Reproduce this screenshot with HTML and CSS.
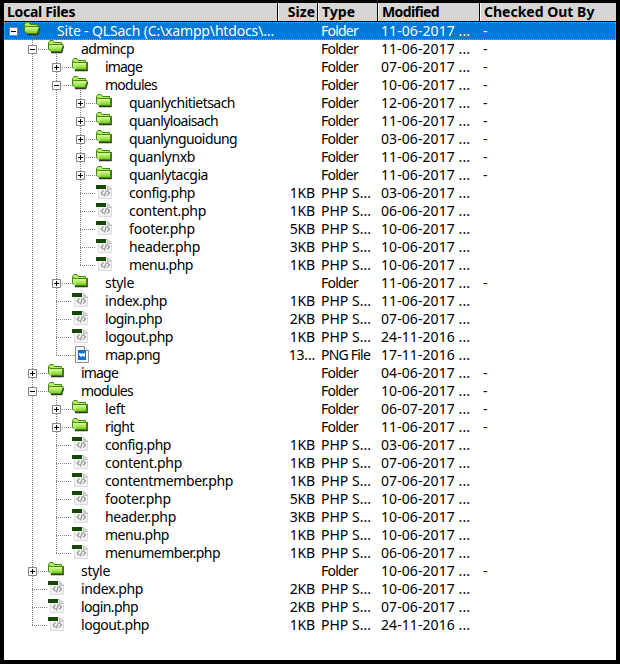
FILE: index.html
```html
<!DOCTYPE html>
<html lang="en">
<head>
<meta charset="utf-8">
<title>Local Files</title>
<link rel="stylesheet" href="styles.css">
</head>
<body>
<svg class="symbols" width="0" height="0">
  <defs>
    <linearGradient id="leaf" x1="0" y1="0" x2="0" y2="1">
      <stop offset="0" stop-color="#e2fb9c"/>
      <stop offset="1" stop-color="#74cf22"/>
    </linearGradient>
    <symbol id="folder" viewBox="1 1 18 18">
      <path d="M4 13.500H16V5" fill="none" stroke="#2c3a22" stroke-width="1.600"/>
      <path d="M1.500 10.500V3.500L3 1.500H6L7.500 3.500H14.500V6" fill="#b9ee62" stroke="#3d8610"/>
      <path d="M4 5.500H15.500V12.500H4L1.500 10V4.500Z" fill="#c9f280" stroke="#3d8610"/>
      <path d="M4.500 6H15V12H4.500Z" fill="url(#leaf)"/>
    </symbol>
    <symbol id="open" viewBox="1 1 18 18">
      <path d="M4 13.500H14.500L16.500 7" fill="none" stroke="#2c3a22" stroke-width="1.600"/>
      <path d="M1.500 10.500V3.500L3 1.500H6L7.500 3.500H14.500V6" fill="#b9ee62" stroke="#3d8610"/>
      <path d="M4.500 5.500H16V7L14 12.500H4L1.500 10V6Z" fill="url(#leaf)" stroke="#3d8610"/>
    </symbol>
    <symbol id="php" viewBox="0 0 18 18">
      <path d="M2.500 1.500H12L15.500 5V14.500H2.500Z" fill="#f3f3f3" stroke="#dcdcdc"/>
      <path d="M11.500 1.500V5.500H15.500Z" fill="#d8d8d8" stroke="#c4c4c4"/>
      <path d="M7.500 6.500L5.200 9L7.500 11.500M11.300 6.500L13.600 9L11.300 11.500M10.300 6L8.500 12.500" fill="none" stroke="#9c9c9c" stroke-width="1.300"/>
      <path d="M0 1H10V5H0Z" fill="#154a05"/>
    </symbol>
    <symbol id="png" viewBox="0 0 18 18">
      <path d="M3.500 .5H12.500L16.500 4.500V16.500H3.500Z" fill="#fafafa" stroke="#8c8c8c"/>
      <path d="M12.500 .5V4.500H16.500" fill="#fff" stroke="#8c8c8c"/>
      <path d="M6 4H14V14H6Z" fill="#0b72cf"/>
      <path d="M7 7H8L9 8L10 7L11 8L12 7H13V10L12 11L10.500 9.500L9 11L7 9Z" fill="#fff"/>
    </symbol>
  </defs>
</svg>
<main class="panel">
  <header class="row head"><span class="tight">Local Files</span><span class="right">Size</span><span>Type</span><span class="tighter">Modified</span><span>Checked Out By</span></header>
  <div id="rows"></div>
</main>
<script src="tree.js"></script>
</body>
</html>
```

FILE: styles.css
```css
body { margin: 0; background: #000; font: 14px/18px "Noto Sans", sans-serif; color: #000; }
.symbols { position: absolute; }
.panel { box-sizing: border-box; margin: 3px 4px 0; height: 657px; background: #fff; overflow: hidden; }
.row { display: grid; grid-template-columns: 274px 40px 60px 102px 136px; height: 18px; white-space: pre; }
.head { height: 19px; background: #d6d6d6; font-weight: 700; line-height: 18px; box-sizing: border-box; border-bottom: 1px solid #000; }
.head span { box-sizing: border-box; padding-left: 3px; border-right: 1px solid #000; }
.head span + span { border-left: 1px solid #fff; }
.head span:last-child { border-right: 0; }
.head .right { text-align: right; padding: 0 2px 0 0; }
.tight { letter-spacing: -.3px; }
.tighter { letter-spacing: -.6px; }
.row.selected { background: #0078d7; color: #fff; outline: 1px dotted #f08a30; outline-offset: -1px; }
.name { display: flex; min-width: 0; }
.guide, .node { flex: none; width: 24px; height: 18px; overflow: visible; }
.pic { flex: none; width: 18px; height: 18px; margin-left: -4px; }
.label { margin-left: 15px; }
.size { text-align: right; padding-right: 3px; letter-spacing: -.2px; }
.type, .date, .out { padding-left: 3px; }
.date { letter-spacing: .08px; }
```

FILE: tree.js
```js
const files = [
  [0, "-open", "Site - QLSach (C:\\xampp\\htdocs\\...", "", "11-06-2017"],
  [1, "-open", "admincp", "", "11-06-2017"],
  [2, "+folder", "image", "", "07-06-2017"],
  [2, "-open", "modules", "", "10-06-2017"],
  [3, "+folder", "quanlychitietsach", "", "12-06-2017"],
  [3, "+folder", "quanlyloaisach", "", "11-06-2017"],
  [3, "+folder", "quanlynguoidung", "", "03-06-2017"],
  [3, "+folder", "quanlynxb", "", "11-06-2017"],
  [3, "+folder", "quanlytacgia", "", "11-06-2017"],
  [3, " php", "config.php", "1KB", "03-06-2017"],
  [3, " php", "content.php", "1KB", "06-06-2017"],
  [3, " php", "footer.php", "5KB", "10-06-2017"],
  [3, " php", "header.php", "3KB", "10-06-2017"],
  [3, " php", "menu.php", "1KB", "10-06-2017"],
  [2, "+folder", "style", "", "11-06-2017"],
  [2, " php", "index.php", "1KB", "11-06-2017"],
  [2, " php", "login.php", "2KB", "07-06-2017"],
  [2, " php", "logout.php", "1KB", "24-11-2016"],
  [2, " png", "map.png", "13...", "17-11-2016"],
  [1, "+folder", "image", "", "04-06-2017"],
  [1, "-open", "modules", "", "10-06-2017"],
  [2, "+folder", "left", "", "06-07-2017"],
  [2, "+folder", "right", "", "11-06-2017"],
  [2, " php", "config.php", "1KB", "03-06-2017"],
  [2, " php", "content.php", "1KB", "07-06-2017"],
  [2, " php", "contentmember.php", "1KB", "07-06-2017"],
  [2, " php", "footer.php", "5KB", "10-06-2017"],
  [2, " php", "header.php", "3KB", "10-06-2017"],
  [2, " php", "menu.php", "1KB", "10-06-2017"],
  [2, " php", "menumember.php", "1KB", "06-06-2017"],
  [1, "+folder", "style", "", "10-06-2017"],
  [1, " php", "index.php", "2KB", "10-06-2017"],
  [1, " php", "login.php", "2KB", "07-06-2017"],
  [1, " php", "logout.php", "1KB", "24-11-2016"]
];

// Text widths in pixels; the letters are spaced to fill them.
const widths = {
  "Site - QLSach (C:\\xampp\\htdocs\\...": 217, "admincp": 53, "image": 37, "modules": 52,
  "quanlychitietsach": 106, "quanlyloaisach": 89, "quanlynguoidung": 108, "quanlynxb": 66,
  "quanlytacgia": 79, "config.php": 66, "content.php": 77, "footer.php": 66, "header.php": 71,
  "menu.php": 64, "style": 29, "index.php": 62, "login.php": 57, "logout.php": 68,
  "map.png": 55, "left": 20, "right": 29, "contentmember.php": 128, "menumember.php": 115,
  "Folder": 37, "PNG File": 49, "PHP S...": 50
};

// True when another entry of the given level follows before its parent closes.
function continues(index, level) {
  for (let i = index + 1; i < files.length; i++) {
    if (files[i][0] < level) return false;
    if (files[i][0] === level) return true;
  }
  return false;
}

const dots = (d) => `<path d="${d}" stroke="#808080" stroke-dasharray="1 1" fill="none"/>`;

function nodeSvg(index, level, mark, kind) {
  const end = continues(index, level) ? 18 : 10;
  let s = level ? dots(`M4.500 0V${end}`) + dots(`M4 9.500H${kind === "png" ? 23 : 19}`) : "";
  if (mark !== " ") {
    s += `<g transform="translate(${level ? 0 : 5} 0)"><path d="M.5 5.500H8.500V13.500H.5Z" fill="#fff" stroke="#848484"/>` +
      '<path d="M2 9.500H7" stroke="#000"/>' + (mark === "+" ? '<path d="M4.500 7V12" stroke="#000"/>' : "") + "</g>";
  }
  if (mark === "-") s += dots("M28.500 14V18");
  return `<svg class="node" viewBox="0 0 24 18">${s}</svg>`;
}

document.getElementById("rows").innerHTML = files.map(([level, icon, name, size, date], i) => {
  let guides = "";
  for (let l = 0; l < level; l++) {
    guides += `<svg class="guide" viewBox="0 0 24 18">${l && continues(i, l) ? dots("M4.500 0V18") : ""}</svg>`;
  }
  const kind = icon.slice(1);
  const folder = kind === "folder" || kind === "open";
  const type = folder ? "Folder" : kind === "png" ? "PNG File" : "PHP S...";
  return `<div class="row${i ? "" : " selected"}"><span class="name">${guides}${nodeSvg(i, level, icon[0], kind)}` +
    `<svg class="pic"><use href="#${kind}"/></svg><span class="label fit">${name}</span></span>` +
    `<span class="size">${size}</span><span class="type"><span class="fit">${type}</span></span><span class="date">${date} ...</span>` +
    `<span class="out">${folder ? "-" : ""}</span></div>`;
}).join("");

for (const el of document.querySelectorAll(".fit")) {
  const text = el.textContent;
  const gap = (widths[text] - el.getBoundingClientRect().width) / text.length;
  el.style.letterSpacing = `${gap.toFixed(3)}px`;
}
```
